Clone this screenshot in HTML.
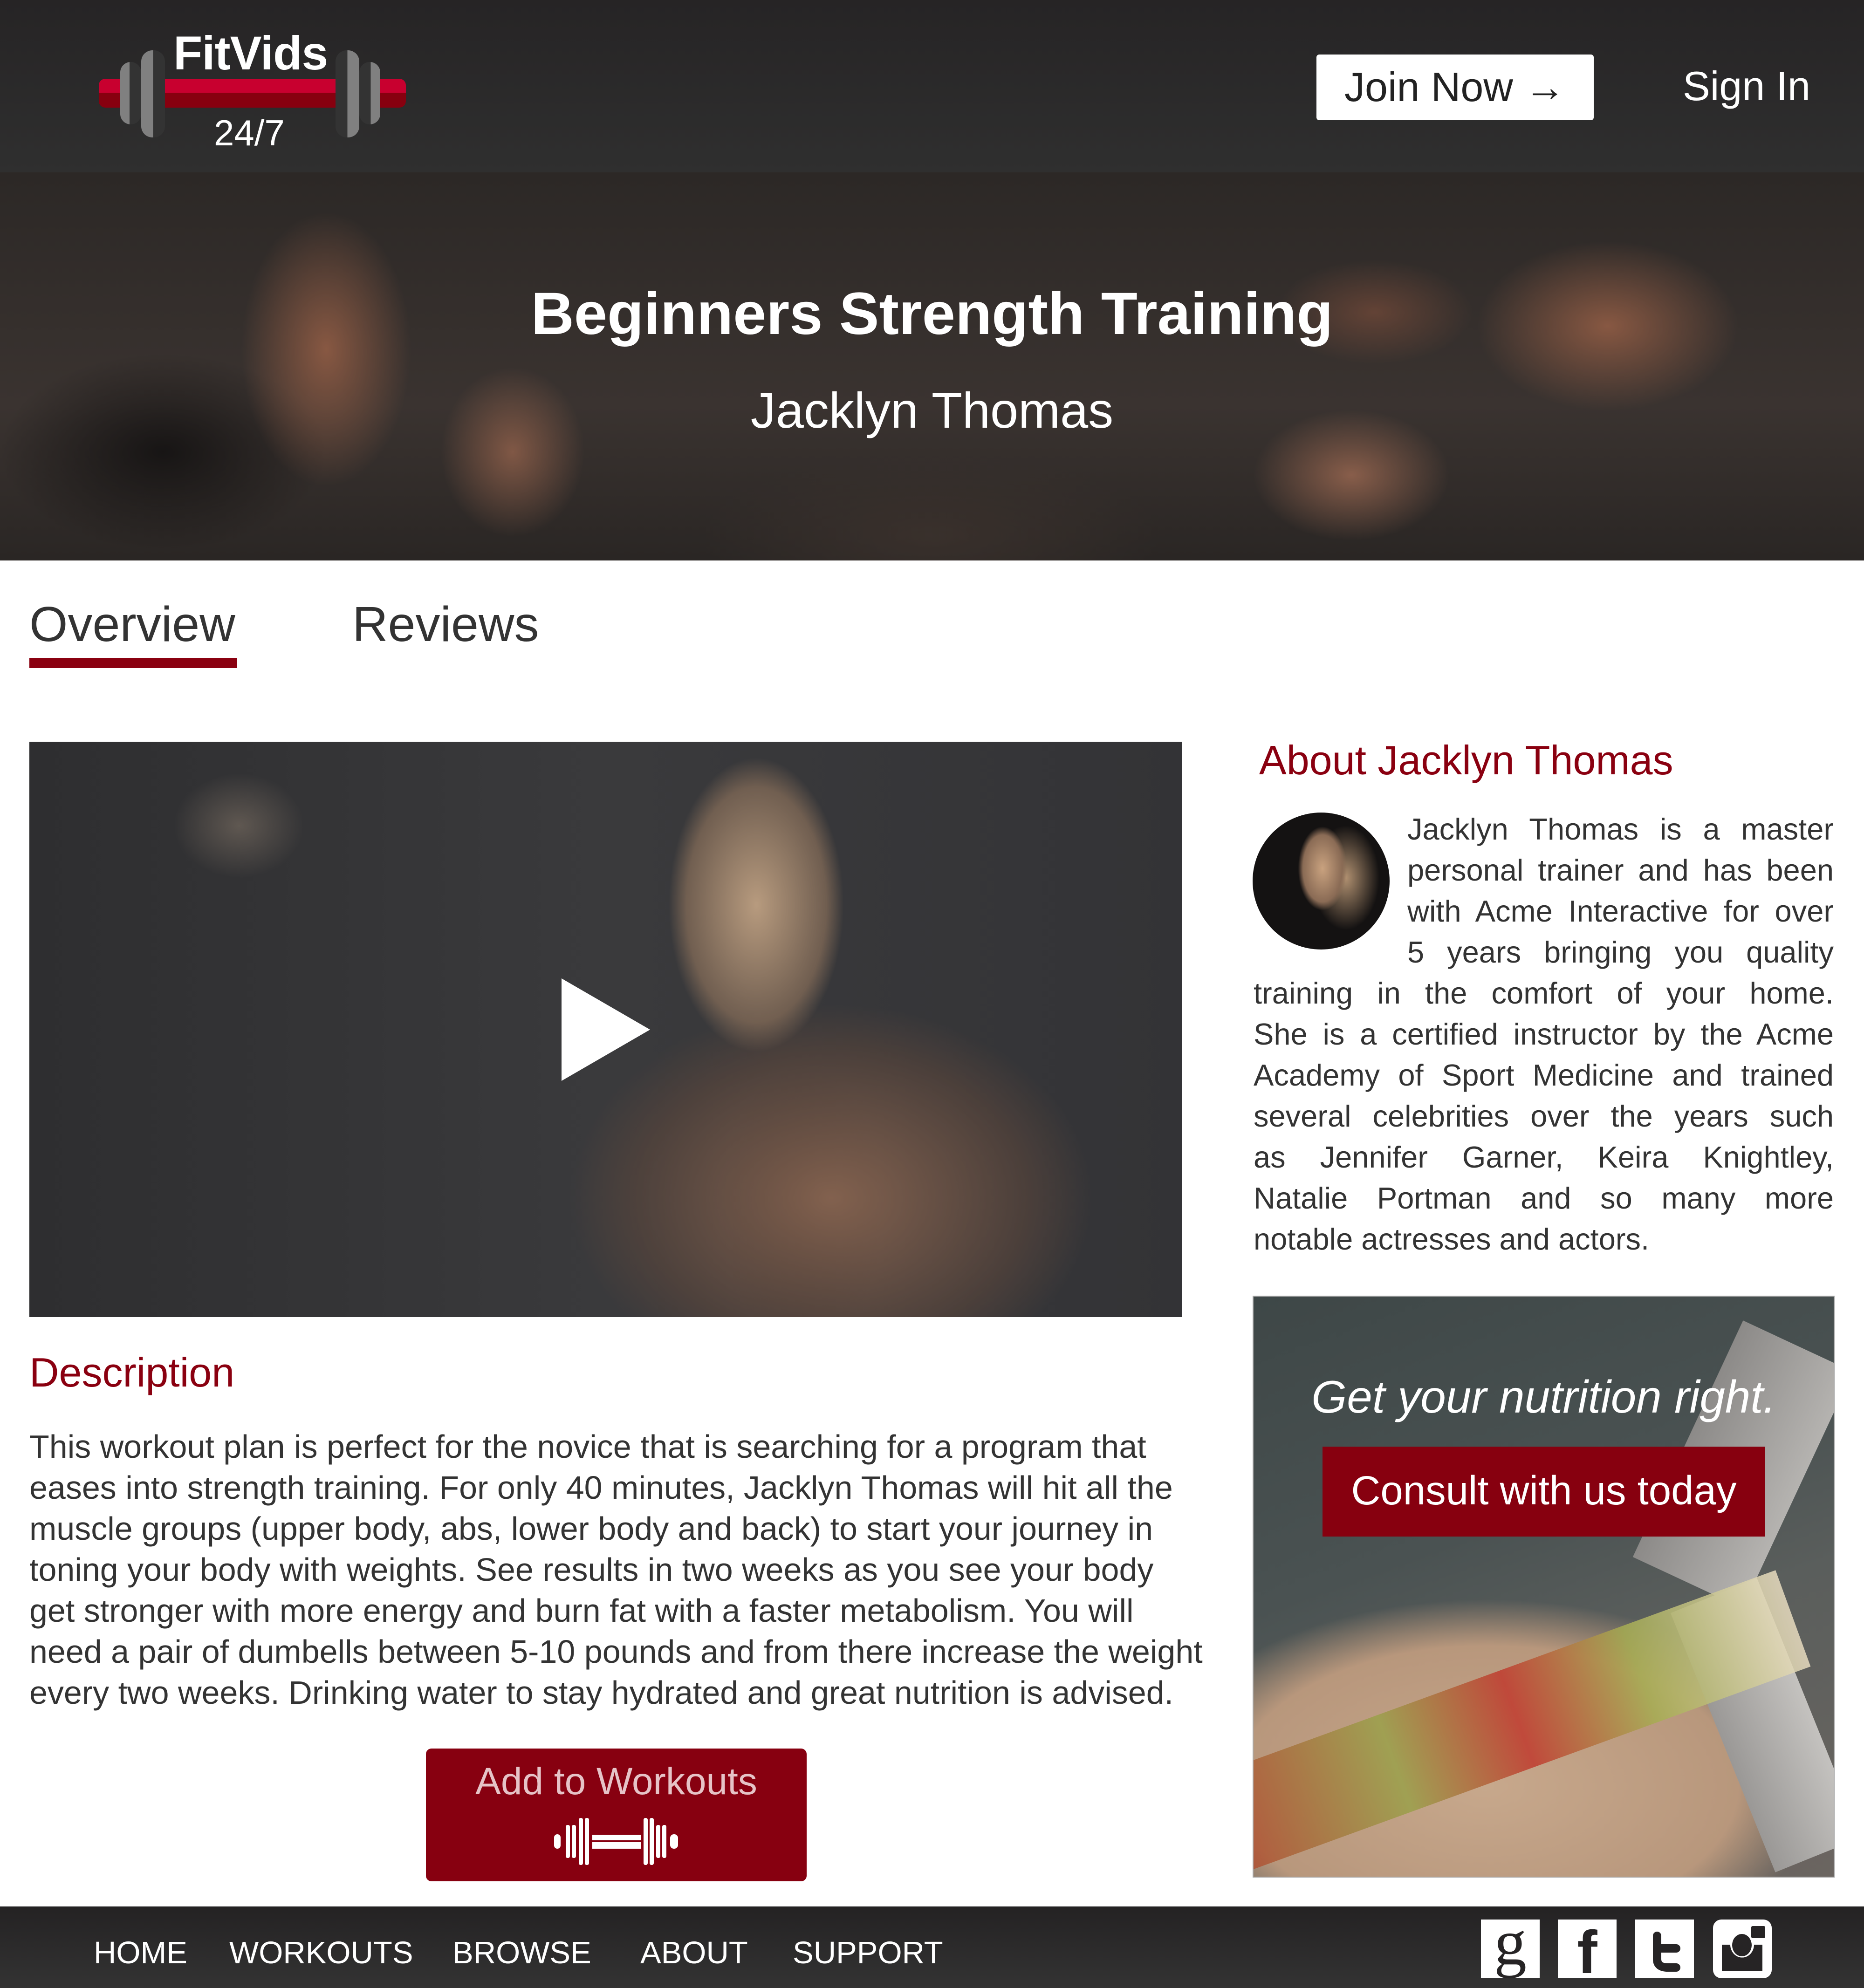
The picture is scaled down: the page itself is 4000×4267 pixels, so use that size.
<!DOCTYPE html>
<html><head><meta charset="utf-8"><style>
*{margin:0;padding:0;box-sizing:border-box}
html,body{width:4000px;height:4267px;background:#fff;overflow:hidden;font-family:"Liberation Sans",sans-serif}
.abs{position:absolute}
#hdr{left:0;top:0;width:4000px;height:370px;background:linear-gradient(#262425,#2f2f2f)}
#hero{left:0;top:370px;width:4000px;height:833px;background:
radial-gradient(ellipse 260px 420px at 700px 380px,rgba(150,95,70,.85),transparent 70%),
radial-gradient(ellipse 220px 260px at 1100px 600px,rgba(160,105,80,.7),transparent 70%),
radial-gradient(ellipse 300px 200px at 2900px 650px,rgba(165,110,85,.75),transparent 70%),
radial-gradient(ellipse 400px 260px at 3450px 330px,rgba(150,95,70,.85),transparent 70%),
radial-gradient(ellipse 300px 160px at 2950px 300px,rgba(130,80,60,.6),transparent 70%),
radial-gradient(ellipse 500px 300px at 350px 600px,rgba(20,18,18,.9),transparent 70%),
radial-gradient(ellipse 700px 250px at 2000px 780px,rgba(60,50,45,.8),transparent 70%),
linear-gradient(#2c2826,#3a3330 60%,#2a2624)}
.plate{position:absolute;border-radius:24px;overflow:hidden}
.txt{position:absolute;white-space:nowrap}
#video{left:63px;top:1592px;width:2473px;height:1235px;background:
radial-gradient(ellipse 250px 420px at 1560px 350px,rgba(190,160,130,.95),rgba(150,120,95,.6) 60%,transparent 75%),
radial-gradient(ellipse 700px 520px at 1720px 980px,rgba(135,100,80,.95),rgba(90,70,60,.6) 60%,transparent 80%),
radial-gradient(ellipse 220px 380px at 1660px 1000px,rgba(35,35,38,.95),transparent 80%),
radial-gradient(ellipse 200px 160px at 450px 180px,rgba(140,125,110,.5),transparent 70%),
linear-gradient(90deg,#2e2e30,#3a3a3c 50%,#333336)}
.p{font-size:70px;color:#333;line-height:88px}
.ab{font-size:65px;color:#333;line-height:88px;text-align:justify;text-align-last:justify;height:88px;white-space:nowrap;overflow:visible}
#ad{left:2688px;top:2781px;width:1249px;height:1249px;overflow:hidden;border:2px solid #aaa;background:
radial-gradient(ellipse 900px 500px at 500px 1050px,#c7a88c,#b8977c 60%,transparent 80%),
linear-gradient(160deg,#3e4747,#4a5252 40%,#5a5e5c 60%,#6b6560)}
#foot{left:0;top:4092px;width:4000px;height:175px;background:linear-gradient(#242223,#333)}
.nav{position:absolute;top:4153px;font-size:67px;color:#fff}
.ico{position:absolute;top:4120px;width:126px;height:126px;background:#fff}
</style></head><body>
<div id="hdr" class="abs"></div>
<div class="abs" style="left:212px;top:169px;width:659px;height:62px;border-radius:14px;overflow:hidden">
<div style="height:30px;background:#c8002f"></div><div style="height:32px;background:#87000f"></div></div>
<div class="plate" style="left:258px;top:133px;width:45px;height:134px;background:linear-gradient(90deg,#808080 45%,#333 45%)"></div>
<div class="plate" style="left:303px;top:108px;width:51px;height:187px;background:linear-gradient(90deg,#808080 50%,#333 50%)"></div>
<div class="plate" style="left:720px;top:108px;width:51px;height:187px;background:linear-gradient(90deg,#333 50%,#808080 50%)"></div>
<div class="plate" style="left:771px;top:133px;width:45px;height:134px;background:linear-gradient(90deg,#333 55%,#808080 55%)"></div>
<div class="txt" style="left:372px;top:56px;font-size:102px;font-weight:bold;color:#fff;letter-spacing:-1px">FitVids</div>
<div class="txt" style="left:459px;top:240px;font-size:78px;color:#fff">24/7</div>
<div class="abs" style="left:2825px;top:117px;width:595px;height:141px;background:#fff;border-radius:6px"></div>
<div class="txt" style="left:2885px;top:136px;font-size:88px;color:#222">Join Now →</div>
<div class="txt" style="left:3611px;top:134px;font-size:88px;color:#fff">Sign In</div>
<div id="hero" class="abs"></div>
<div class="txt" style="left:0;width:4000px;text-align:center;top:600px;font-size:128px;font-weight:bold;color:#fff">Beginners Strength Training</div>
<div class="txt" style="left:0;width:4000px;text-align:center;top:818px;font-size:108px;color:#fff">Jacklyn Thomas</div>
<div class="txt" style="left:63px;top:1280px;font-size:106px;color:#333">Overview</div>
<div class="abs" style="left:63px;top:1412px;width:446px;height:22px;background:#8a0010"></div>
<div class="txt" style="left:756px;top:1280px;font-size:106px;color:#333">Reviews</div>
<div id="video" class="abs"></div>
<svg class="abs" style="left:1205px;top:2100px" width="190" height="220"><polygon points="0,0 190,110 0,220" fill="#fff"/></svg>
<div class="txt" style="left:63px;top:2895px;font-size:88px;color:#8a0010">Description</div>
<div class="abs p" style="left:63px;top:3061px;white-space:nowrap">This workout plan is perfect for the novice that is searching for a program that<br>eases into strength training. For only 40 minutes, Jacklyn Thomas will hit all the<br>muscle groups (upper body, abs, lower body and back) to start your journey in<br>toning your body with weights. See results in two weeks as you see your body<br>get stronger with more energy and burn fat with a faster metabolism. You will<br>need a pair of dumbells between 5-10 pounds and from there increase the weight<br>every two weeks. Drinking water to stay hydrated and great nutrition is advised.</div>
<div class="abs" style="left:914px;top:3753px;width:817px;height:285px;background:#870010;border-radius:12px"></div>
<div class="txt" style="left:914px;width:817px;text-align:center;top:3777px;font-size:82px;color:#e6c3c7">Add to Workouts</div>
<svg class="abs" style="left:1189px;top:3902px" width="266" height="101" viewBox="0 0 266 101">
<g fill="#fff">
<rect x="0" y="35" width="14" height="31" rx="7"/><rect x="249" y="35" width="17" height="31" rx="8"/>
<rect x="25" y="15" width="9" height="71" rx="4"/><rect x="38" y="15" width="9" height="71" rx="4"/>
<rect x="53" y="0" width="9" height="101" rx="4"/><rect x="66" y="0" width="9" height="101" rx="4"/>
<rect x="82" y="36" width="105" height="12"/><rect x="82" y="52" width="105" height="14"/>
<rect x="192" y="0" width="9" height="101" rx="4"/><rect x="205" y="0" width="9" height="101" rx="4"/>
<rect x="219" y="15" width="9" height="71" rx="4"/><rect x="232" y="15" width="9" height="71" rx="4"/>
</g></svg>
<div class="txt" style="left:2702px;top:1581px;font-size:88px;color:#8a0010">About Jacklyn Thomas</div>
<div class="abs" style="left:2688px;top:1744px;width:294px;height:294px;border-radius:50%;background:radial-gradient(ellipse 70px 120px at 150px 120px,#c9a27f,#8a6b55 60%,transparent 75%),radial-gradient(ellipse 90px 140px at 200px 140px,#b09070,transparent 80%),#141212"></div>
<div class="abs" style="left:3020px;top:1736px;width:915px">
<div class="ab">Jacklyn Thomas is a master</div>
<div class="ab">personal trainer and has been</div>
<div class="ab">with Acme Interactive for over</div>
<div class="ab">5 years bringing you quality</div></div>
<div class="abs" style="left:2690px;top:2088px;width:1245px">
<div class="ab">training in the comfort of your home.</div>
<div class="ab">She is a certified instructor by the Acme</div>
<div class="ab">Academy of Sport Medicine and trained</div>
<div class="ab">several celebrities over the years such</div>
<div class="ab">as Jennifer Garner, Keira Knightley,</div>
<div class="ab">Natalie Portman and so many more</div>
<div class="ab" style="text-align-last:left">notable actresses and actors.</div></div>
<div id="ad" class="abs">
<div class="abs" style="left:920px;top:80px;width:260px;height:560px;background:linear-gradient(90deg,#8c8a88,#b5b3b0);transform:rotate(25deg)"></div>
<div class="abs" style="left:1000px;top:620px;width:200px;height:600px;background:linear-gradient(90deg,#9a9896,#c4c2bf);transform:rotate(-22deg)"></div>
<div class="abs" style="left:-200px;top:820px;width:1400px;height:220px;background:linear-gradient(90deg,#b8342c,#9aa04a 35%,#c03a2e 55%,#a6ad52 75%,#e8dcc0);transform:rotate(-20deg);opacity:.85"></div>
</div>
<div class="txt" style="left:2688px;width:1249px;text-align:center;top:2942px;font-size:98px;font-style:italic;color:#fff">Get your nutrition right.</div>
<div class="abs" style="left:2838px;top:3105px;width:950px;height:193px;background:#87000f"></div>
<div class="txt" style="left:2838px;width:950px;text-align:center;top:3150px;font-size:87px;color:#fff">Consult with us today</div>
<div id="foot" class="abs"></div>
<div class="nav" style="left:201px">HOME</div>
<div class="nav" style="left:492px">WORKOUTS</div>
<div class="nav" style="left:971px">BROWSE</div>
<div class="nav" style="left:1374px">ABOUT</div>
<div class="nav" style="left:1701px">SUPPORT</div>
<div class="ico" style="left:3178px"><div style="font-family:'Liberation Serif',serif;font-size:140px;color:#262425;text-align:center;line-height:100px">g</div></div>
<div class="ico" style="left:3343px"><div style="font-family:'Liberation Sans',sans-serif;font-weight:bold;font-size:130px;color:#262425;text-align:center;line-height:140px">f</div></div>
<div class="ico" style="left:3509px"><svg width="126" height="126"><path d="M47 35 V85 Q47 103 70 103 H88" stroke="#262425" stroke-width="18" fill="none" stroke-linecap="round"/><path d="M47 62 H88" stroke="#262425" stroke-width="18" stroke-linecap="round"/></svg></div>
<div class="ico" style="left:3676px;border-radius:18px"><svg width="126" height="126"><rect x="82" y="14" width="30" height="26" rx="3" fill="#262425"/><path d="M19 54 V111 H106 V54 H88 A25 27 0 0 1 37 54 Z" fill="#262425"/><ellipse cx="62" cy="55" rx="21" ry="24" fill="#262425"/></svg></div>
</body></html>
